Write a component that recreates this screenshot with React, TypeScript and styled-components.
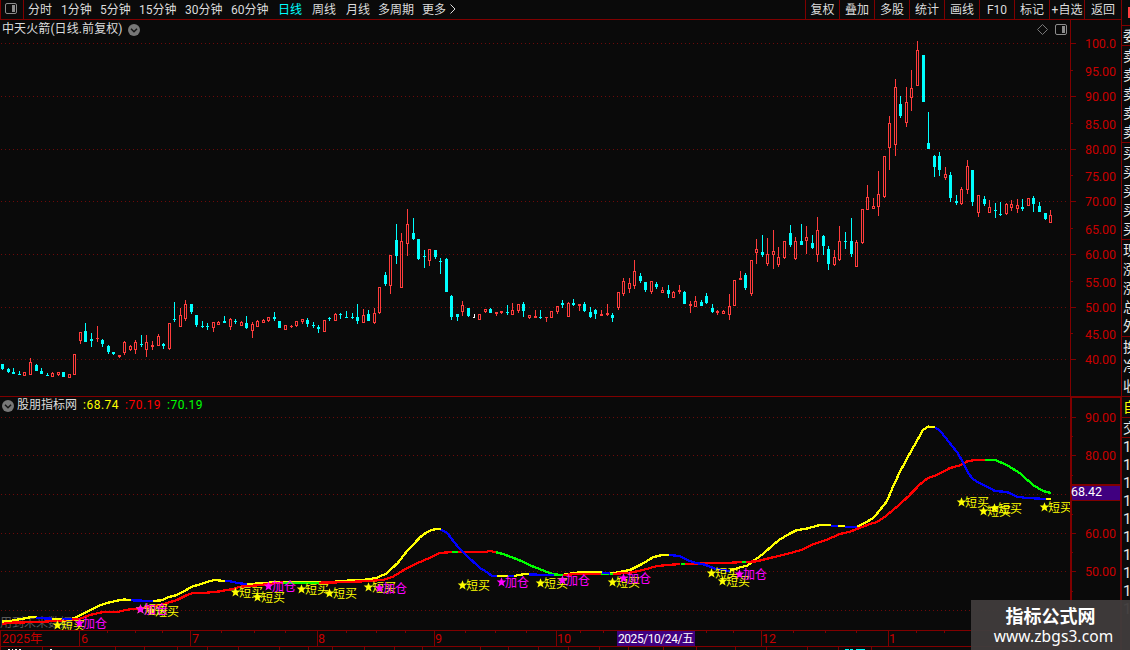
import React from 'react';
import styled, { createGlobalStyle } from 'styled-components';

const CJK = `Roboto, "Noto Sans CJK SC", sans-serif`;
const LINE = '#800000';
const GRID = '#6e0a0a';

const GlobalStyle = createGlobalStyle`
  * { box-sizing: border-box; }
  body { margin: 0; background: #0a0a0a; overflow: hidden; }
`;

const Screen = styled.div`
  position: relative;
  width: 1130px;
  height: 650px;
  display: flex;
  overflow: hidden;
  background: #0a0a0a;
  color: #dcdcdc;
  font-family: ${CJK};
  font-size: 12px;
  svg { display: block; flex: none; }
  svg text { font-family: ${CJK}; }
`;

const Main = styled.div`
  width: 1122px;
  flex: none;
  display: flex;
  flex-direction: column;
`;

const Toolbar = styled.div`
  height: 20px;
  flex: none;
  display: flex;
  border-bottom: 1px solid ${LINE};
  line-height: 21px;
  white-space: nowrap;
`;

const LayoutToggle = styled.div`
  width: 24px;
  border-left: 1px solid ${LINE};
  border-right: 1px solid ${LINE};
  padding: 3px 0 0 4px;
  margin-right: 4px;
`;

const Period = styled.div<{ $w: number; $active?: boolean }>`
  width: ${(p) => p.$w}px;
  flex: none;
  color: ${(p) => (p.$active ? '#00ffff' : '#dcdcdc')};
  svg { margin-top: 4px; }
`;

const Actions = styled.div`
  margin-left: auto;
  display: flex;
  border-right: 1px solid ${LINE};
`;

const Action = styled.div<{ $w: number }>`
  width: ${(p) => p.$w}px;
  height: 19px;
  border-left: 1px solid ${LINE};
  text-align: center;
`;

const Body = styled.div`
  display: flex;
  height: 630px;
`;

const Charts = styled.div`
  width: 1070px;
  flex: none;
  display: flex;
  flex-direction: column;
`;

const PanelHeader = styled.div<{ $h: number }>`
  height: ${(p) => p.$h}px;
  flex: none;
  display: flex;
  align-items: center;
  padding: 0 3px 0 2px;
  white-space: nowrap;
`;

const Title = styled.span`
  height: 16px;
  line-height: 14px;
  width: 120px;
  margin-right: 6px;
  letter-spacing: 0.1px;
`;

const HeaderIcons = styled.div`
  margin-left: auto;
  display: flex;
  gap: 7px;
`;

const IndicatorPanel = styled.div`
  border-top: 1px solid ${LINE};
  height: 234px;
`;

const Name = styled.span`
  margin: 0 6px 0 3px;
  height: 16px;
  line-height: 14px;
`;

const Reading = styled.span<{ $c: string }>`
  width: 42px;
  height: 16px;
  line-height: 14px;
  color: ${(p) => p.$c};
  letter-spacing: 0.5px;
`;

const Side = styled.div`
  width: 8px;
  flex: none;
  overflow: hidden;
  display: flex;
  flex-direction: column;
`;

const SideGroup = styled.div<{ $h: number }>`
  height: ${(p) => p.$h}px;
  flex: none;
  border-bottom: 1px solid ${LINE};
  display: flex;
  flex-direction: column;
  justify-content: space-around;
  overflow: hidden;
`;

const SideText = styled.div<{ $c?: string; $size?: number }>`
  height: 18px;
  padding-left: 1px;
  line-height: 18px;
  white-space: nowrap;
  font-size: ${(p) => p.$size ?? 14}px;
  color: ${(p) => p.$c ?? '#e6e6e6'};
`;

const Alert = styled.div`
  width: 2px;
  height: 11px;
  margin: 0 0 0 6px;
  background: #ff4040;
`;

const Brand = styled.div`
  position: absolute;
  right: 0;
  bottom: 0;
  width: 159px;
  height: 50px;
  background: rgba(64, 59, 59, 0.96);
  color: #fff;
  text-align: center;
`;

const BrandName = styled.div`
  margin-top: 3px;
  font: bold 18px/24px "Noto Sans CJK SC", sans-serif;
`;

const BrandUrl = styled.div`
  margin-left: 6px;
  font: 15.5px/18px "Noto Sans", sans-serif;
  letter-spacing: 0.1px;
`;

type Kind = 'u' | 'd' | 'w';
type Candle = [number, number, number, number, number, Kind];

// x, high, body top, body bottom, low, direction
const candles: Candle[] = [
  [2,364,364,369,370,'d'],[8,368,369,372,373,'d'],[13,368,372,374,374,'d'],[19,371,374,375,375,'d'],[24,372,372,376,376,'u'],
  [30,358,362,375,375,'u'],[36,364,365,371,371,'d'],[41,368,371,374,374,'d'],[47,373,375,376,376,'d'],[52,372,373,377,377,'u'],
  [58,372,372,375,376,'u'],[63,372,372,377,377,'d'],[69,374,374,378,378,'u'],[74,354,354,375,375,'u'],[80,332,332,341,344,'u'],
  [85,323,331,342,342,'d'],[91,333,339,341,347,'d'],[97,326,338,339,342,'u'],[102,339,340,344,347,'d'],[108,345,346,352,354,'d'],
  [113,352,352,354,355,'d'],[119,355,355,357,358,'u'],[124,341,342,353,355,'u'],[130,345,346,350,351,'u'],[135,340,342,350,354,'u'],
  [141,335,344,345,347,'d'],[146,335,342,350,357,'u'],[152,341,345,347,350,'u'],[158,334,336,346,346,'u'],[163,343,344,346,349,'d'],
  [169,323,323,349,350,'u'],[174,302,319,320,322,'d'],[180,308,315,327,327,'u'],[185,300,304,319,321,'u'],[191,304,304,312,314,'d'],
  [196,315,315,325,327,'d'],[202,321,326,327,328,'d'],[207,323,326,327,330,'d'],[213,322,322,328,332,'u'],[218,321,322,325,325,'u'],
  [224,316,321,323,323,'d'],[230,318,319,327,330,'u'],[235,319,321,322,324,'d'],[241,321,322,326,326,'u'],[246,316,323,328,329,'d'],
  [252,322,324,331,338,'u'],[257,320,321,327,327,'u'],[263,319,320,323,323,'u'],[268,317,317,321,322,'u'],[274,312,317,319,321,'d'],
  [279,321,321,328,328,'d'],[285,325,325,330,330,'u'],[291,325,326,327,328,'u'],[296,321,321,326,327,'u'],[302,319,319,322,324,'u'],
  [307,318,320,324,327,'d'],[313,322,325,326,328,'d'],[318,325,327,329,333,'d'],[324,320,320,332,332,'u'],[329,317,318,319,321,'d'],
  [335,313,314,321,321,'u'],[340,313,314,315,319,'d'],[346,311,317,318,318,'d'],[352,313,317,318,319,'d'],[357,304,317,321,324,'d'],
  [363,309,315,323,323,'u'],[368,310,314,321,321,'d'],[374,308,313,323,324,'u'],[379,287,287,313,314,'u'],[385,272,275,284,286,'d'],
  [390,255,255,286,294,'u'],[396,224,240,256,264,'d'],[401,233,241,288,288,'u'],[407,209,224,244,256,'u'],[413,218,233,239,240,'d'],
  [418,239,239,259,260,'d'],[424,250,256,257,268,'d'],[429,249,249,261,266,'u'],[435,250,250,257,259,'d'],[440,258,261,262,274,'d'],
  [446,258,259,292,292,'d'],[451,295,296,317,320,'d'],[457,314,314,317,321,'d'],[462,301,305,312,316,'u'],[468,308,308,316,317,'d'],
  [474,314,317,318,318,'w'],[479,314,314,320,320,'u'],[485,309,309,312,313,'u'],[490,308,309,313,313,'d'],[496,312,312,314,316,'u'],
  [501,311,311,313,314,'u'],[507,305,312,313,315,'d'],[512,303,310,315,315,'u'],[518,304,304,311,313,'u'],[523,302,304,311,317,'d'],
  [529,315,315,318,319,'u'],[535,310,316,318,318,'u'],[540,310,317,318,319,'d'],[546,317,317,318,322,'u'],[551,311,311,318,318,'u'],
  [557,306,306,312,314,'u'],[562,300,303,305,308,'d'],[568,302,303,317,317,'u'],[573,299,303,305,306,'d'],[579,304,304,306,311,'u'],
  [584,302,304,311,312,'d'],[590,307,312,317,318,'d'],[595,309,310,314,319,'d'],[601,310,314,316,316,'u'],[607,304,313,315,316,'u'],
  [612,313,315,318,322,'d'],[618,292,292,308,310,'u'],[623,278,281,294,296,'u'],[629,278,283,289,293,'u'],[634,260,271,286,289,'u'],
  [640,273,276,281,283,'d'],[645,282,282,290,292,'d'],[651,281,281,292,294,'u'],[656,282,284,287,289,'d'],[662,287,290,293,293,'u'],
  [668,285,290,294,298,'d'],[673,291,292,298,298,'u'],[679,285,290,292,294,'u'],[684,291,292,304,304,'d'],[690,301,304,306,313,'u'],
  [695,296,301,307,307,'u'],[701,300,302,306,306,'d'],[706,293,296,303,304,'d'],[712,304,308,312,313,'d'],[717,310,311,313,315,'u'],
  [723,310,311,314,314,'u'],[729,294,306,315,320,'u'],[734,280,280,306,306,'u'],[740,271,278,280,280,'u'],[745,273,275,288,290,'d'],
  [751,260,260,294,296,'u'],[756,239,249,253,264,'u'],[762,235,252,255,257,'d'],[767,238,254,264,266,'u'],[773,230,251,255,269,'u'],
  [778,247,257,265,267,'u'],[784,241,241,258,259,'u'],[790,225,233,245,247,'d'],[795,237,241,259,260,'u'],[801,224,241,245,245,'d'],
  [806,226,237,241,254,'u'],[812,235,243,248,249,'d'],[817,217,230,255,262,'u'],[823,235,236,246,255,'d'],[828,246,249,264,270,'d'],
  [834,250,257,265,266,'u'],[839,226,241,260,261,'u'],[845,232,241,242,249,'d'],[851,218,241,254,257,'d'],[856,240,242,267,267,'u'],
  [862,209,209,243,244,'u'],[867,185,197,210,210,'u'],[873,198,206,209,209,'u'],[878,171,194,207,216,'u'],[884,156,156,197,198,'u'],
  [889,116,123,148,170,'u'],[895,79,87,145,156,'u'],[900,96,104,116,118,'d'],[906,87,102,123,127,'u'],[911,70,88,98,111,'u'],
  [917,41,50,86,86,'u'],[923,55,55,102,102,'d'],[928,112,143,149,149,'d'],[934,155,156,167,177,'d'],[939,152,156,170,176,'d'],
  [945,167,174,178,180,'u'],[950,172,175,198,202,'d'],[956,195,201,203,205,'d'],[961,187,189,204,205,'u'],[967,160,166,190,194,'u'],
  [972,170,170,202,206,'d'],[978,195,195,213,217,'u'],[984,196,199,204,206,'d'],[989,200,207,213,213,'u'],[995,203,210,211,218,'d'],
  [1000,202,214,215,216,'d'],[1006,203,204,214,215,'u'],[1011,200,204,208,211,'u'],[1017,199,205,209,213,'u'],[1022,199,207,209,211,'d'],
  [1028,198,198,206,206,'u'],[1033,196,198,204,212,'d'],[1039,202,206,212,212,'d'],[1045,213,213,219,220,'d'],[1050,210,215,223,223,'u'],
];

const Y = '#ffff00';
const B = '#0000ff';
const R = '#ff0000';
const G = '#00ff00';
const M = '#ff00ff';

type Segment = [string, string];

const fastLine: Segment[] = [
  [Y, '2,621.7 10,621 17,619.7 25,618.3 32,617 37,617'],
  [B, '36,618 52,618.7'],
  [Y, '52,618.7 62,619'],
  [B, '62,619 72,619'],
  [Y, '72,619 80,615.3 87,612 95,607.7 100,605.3 108,602.7 117,600.7 124,599.5 131,600'],
  [B, '131,600.3 153,601'],
  [Y, '153,601 162,600.3 168,597.3 177,595 183,591.7 192,586.7 200,584.3 208,581.7 214,580 225,581'],
  [B, '225,581 230,581.3 238,583 247,584.3'],
  [Y, '247,584 263,583.3 273,582.3 293,582 307,582 335,581.7 340,581 362,580 370,579 377,578 382,575.3 386,574 392,568.3 398,562.7 406,552.3 412,546 420,537.3 427,532 433,529.7 438,528.7 441,529'],
  [B, '441,529.5 447,532.7 452,539.3 460,549.3 470,558.7 480,568 487,572.3 492,576 497,576'],
  [Y, '497,576 508,576'],
  [B, '508,576 514,576'],
  [Y, '514,576 523,574.3 529,574'],
  [B, '529,574.5 554,575'],
  [Y, '554,575 566,574.6 572,573.3 580,572.3 602,572.3'],
  [B, '602,572.5 610,573.5'],
  [Y, '610,573.5 618,572.3 630,570 642,564 653,557.3 662,555 669,554.7'],
  [B, '669,555 680,556 688,560.3 695,562.7 705,564.7 715,568.7 727,570.7 730,570.7'],
  [Y, '730,570.5 740,567.3 747,565.7 753,561.3 762,554.7 770,547.7 779,540 790,533.5 797,530 805,529 820,525 831,525'],
  [B, '831,525.7 838,525.7'],
  [Y, '838,525.7 845,526'],
  [B, '845,526.7 857,526.7'],
  [Y, '857,526.7 865,522.7 873,518.3 880,510 887,501 893,486.7 900,471.7 908,456.7 917,440.7 923,430 928,426.6 935,427.3'],
  [B, '935,427.3 940,430.7 950,443.3 958,453.3 963,462.7 968,472.7 973,479.3 980,483.3 995,491 1007,492 1017,496.7 1027,498 1046,499'],
  [Y, '1046,499 1051,499'],
];

const slowLine: Segment[] = [
  [R, '2,624 10,622.7 40,622 50,621.3 67,620.3 80,618.7 90,615 100,612.7 107,611.7 117,612.3 125,610 147,607.3 160,605 168,602.7 177,600 187,595 193,593 207,592.7 220,591.3 233,589 240,586.7 253,585.7 263,584.7 283,582.3'],
  [G, '283,582.7 319,582.7'],
  [R, '319,582.7 340,582.3 363,581.3 383,580 393,576.7 405,569.3 417,563.3 430,557.7 440,553 452,552'],
  [G, '452,552 458,552'],
  [R, '458,552 485,552 490,551 496,552.3'],
  [G, '496,552.3 503,554 513,557.7 523,561.7 530,565.3 542,570 553,574.3 563,575'],
  [R, '563,575 573,574.3 590,573.7 601,573.7'],
  [G, '601,573.7 613,574'],
  [R, '613,574 630,572.7 643,570 657,566 680,564'],
  [G, '681,564 685,564'],
  [R, '685,564 707,563 727,563 742,562'],
  [G, '742,562 746,562'],
  [R, '746,562 757,561.3 773,557.3 788,553.7 802,549.7 813,544.3 826,540 840,534 850,531.7 860,527.7 870,524 877,522 885,516.7 897,506.7 908,496.7 920,484.3 928,478 937,475 950,468 960,465.3 968,461 978,459.7 985,460'],
  [G, '985,460 995,460 1007,465 1020,473.3 1033,485 1043,491 1051,493'],
];

const buys = [[57,625],[140,609],[151,611],[235,592],[257,597],[301,589],[329,593],[368,587],[462,585],[540,583],[612,582],[711,573],[722,581],[961,502],[983,511],[994,508],[1044,507]];
const adds = [[79,623],[140,609],[268,586],[379,588],[501,582],[562,580],[623,578],[739,574]];

const monthTicks = [79,190,317,434,556,761,888];
const weekTicks = [107,135,162,221,254,285,346,376,405,465,495,526,580,603,706,733,793,825,856,916,944];
const footTicks = [42,115,144,177,207,238,279,308,332,364,394,422,480,508,538,568,599,628,663,696,735,766,807,838,871];
const months: [number, string][] = [[81,'6'],[192,'7'],[318,'8'],[435,'9'],[557,'10'],[762,'12'],[889,'1']];

const priceLabels: [number, string][] = [[43,'100.0'],[71,'95.00'],[96,'90.00'],[124,'85.00'],[149,'80.00'],[176,'75.00'],[201,'70.00'],[229,'65.00'],[254,'60.00'],[282,'55.00'],[307,'50.00'],[334,'45.00'],[359,'40.00'],[417,'90.00'],[455,'80.00'],[533,'60.00'],[571,'50.00']];

const Grid = ({ rows }: { rows: number[] }) => (
  <g stroke={GRID} strokeDasharray="1 3" shapeRendering="crispEdges">
    {rows.map((y) => <line key={y} x1={1} x2={1068} y1={y + 0.5} y2={y + 0.5} />)}
  </g>
);

const CandleShape = ({ c }: { c: Candle }) => {
  const [x, high, top, bottom, low, kind] = c;
  if (kind === 'w') {
    return <path fill="#fff" d={`M${x} ${high}h1v${low - high}h-2v-1h1z`} />;
  }
  if (kind === 'd') {
    return (
      <g fill="#00ffff">
        <rect x={x} y={high} width={1} height={low - high} />
        <rect x={x - 1} y={top} width={3} height={bottom - top} />
      </g>
    );
  }
  return (
    <g fill="#ff3c3c">
      <rect x={x} y={high} width={1} height={top - high} />
      <rect x={x} y={bottom} width={1} height={low - bottom} />
      {bottom - top > 2
        ? <rect x={x - 0.5} y={top + 0.5} width={2} height={bottom - top - 1} fill="none" stroke="#ff3c3c" />
        : <rect x={x - 1} y={top} width={3} height={bottom - top} />}
    </g>
  );
};

const Curve = ({ parts }: { parts: Segment[] }) => (
  <g fill="none" strokeWidth={2.3} shapeRendering="crispEdges">
    {parts.map(([color, points]) => <polyline key={points} stroke={color} points={points} />)}
  </g>
);

const Marker = ({ x, y, color, label }: { x: number; y: number; color: string; label: string }) => (
  <g fill={color} transform={`translate(${x + 0.5} ${y})`}>
    <path d="M0-4.8L1.3-1.5H4.8L2 1 3.1 4.6 0 2.5-3.1 4.6-2 1-4.8-1.5H-1.3z" />
    <text x={3.5} y={5} fontSize={12}>{label}</text>
  </g>
);

const ChevronBadge = () => (
  <svg width="12" height="12" viewBox="0 0 12 12">
    <circle cx="6" cy="6" r="6" fill="#777" />
    <path d="M3 4.7l3 3 3-3" fill="none" stroke="#151515" strokeWidth="1.5" />
  </svg>
);

const SplitIcon = ({ color }: { color: string }) => (
  <svg width="12" height="11" viewBox="0 0 12 11">
    <rect x=".5" y=".5" width="11" height="10" rx="1.5" fill="none" stroke={color} />
    <rect x="7" y="2" width="3" height="7" fill={color} />
  </svg>
);

const periods: [string, number][] = [['分时',33],['1分钟',39],['5分钟',39],['15分钟',46],['30分钟',46],['60分钟',47],['日线',34],['周线',34],['月线',32],['多周期',44],['更多',28]];
const actions: [string, number][] = [['复权',34],['叠加',35],['多股',35],['统计',35],['画线',35],['F10',35],['标记',35],['+自选',35],['返回',37]];

export default function App() {
  return (
    <>
      <GlobalStyle />
      <Screen>
        <Main>
          <Toolbar>
            <LayoutToggle><SplitIcon color="#8c8c8c" /></LayoutToggle>
            {periods.map(([label, w]) => <Period key={label} $w={w} $active={label === '日线'}>{label}</Period>)}
            <Period $w={8}>
              <svg width="6" height="10" viewBox="0 0 6 10"><path d="M.5.5L5 5 .5 9.5" fill="none" stroke="#dcdcdc" /></svg>
            </Period>
            <Actions>
              {actions.map(([label, w]) => <Action key={label} $w={w}>{label}</Action>)}
            </Actions>
          </Toolbar>
          <Body>
            <Charts>
              <PanelHeader $h={19}>
                <Title>中天火箭(日线.前复权)</Title>
                <ChevronBadge />
                <HeaderIcons>
                  <svg width="11" height="11" viewBox="0 0 11 11"><path d="M5.5.5l5 5-5 5-5-5z" fill="none" stroke="#777" /></svg>
                  <SplitIcon color="#8c8c8c" />
                </HeaderIcons>
              </PanelHeader>
              <svg width="1070" height="357" viewBox="0 39 1070 357">
                <Grid rows={[43, 96, 149, 201, 254, 307, 359]} />
                <g shapeRendering="crispEdges">
                  {candles.map((c) => <CandleShape key={c[0]} c={c} />)}
                </g>
              </svg>
              <IndicatorPanel>
                <PanelHeader $h={17}>
                  <ChevronBadge />
                  <Name>股朋指标网</Name>
                  <Reading $c="#ffff00">:68.74</Reading>
                  <Reading $c="#ff0000">:70.19</Reading>
                  <Reading $c="#00ff00">:70.19</Reading>
                </PanelHeader>
                <svg width="1070" height="216" viewBox="0 414 1070 216">
                  <Grid rows={[417, 455, 494, 533, 571, 610]} />
                  <text x="0" y="627" fontSize="12" fill="#5a5a5a">用到未来数据</text>
                  <Curve parts={fastLine.filter(([c]) => c === Y)} />
                  <Curve parts={slowLine} />
                  <Curve parts={fastLine.filter(([c]) => c === B)} />
                  {buys.map(([x, y]) => <Marker key={x} x={x} y={y} color={Y} label="短买" />)}
                  {adds.map(([x, y]) => <Marker key={x} x={x} y={y} color={M} label="加仓" />)}
                </svg>
              </IndicatorPanel>
              <svg width="1070" height="20" viewBox="0 630 1070 20">
                <g fill={LINE} shapeRendering="crispEdges">
                  <rect x="0" y="630" width="1070" height="1" />
                  <rect x="0" y="646" width="1070" height="1" />
                  <rect x="0" y="630" width="1" height="20" />
                  {monthTicks.map((x) => <rect key={x} x={x} y={630} width={1} height={16} />)}
                  {weekTicks.map((x) => <rect key={x} x={x} y={630} width={1} height={3} />)}
                  {footTicks.map((x) => <rect key={x} x={x} y={647} width={1} height={3} />)}
                </g>
                <g fill="#c80000" fontSize="12.5">
                  <text x="2" y="643">2025年</text>
                  {months.map(([x, label]) => <text key={x} x={x} y={643}>{label}</text>)}
                </g>
                <rect x="617" y="631" width="78" height="15" fill="#400080" />
                <text x="618" y="642.5" fontSize="12" fill="#fff" textLength="76">2025/10/24/五</text>
                <path d="M8 649.5h2m2 0h1m2 0h2m2 0h2M50 649.5h2" stroke="#fff" />
                <path d="M845 649.5h4m1 0h3m3 0h9" stroke="#00ffff" />
              </svg>
            </Charts>
            <svg width="52" height="630" viewBox="1070 20 52 630">
              <g fill={LINE} shapeRendering="crispEdges">
                <rect x="1070" y="20" width="1" height="630" />
                <rect x="1071" y="397" width="1" height="253" />
                <rect x="1121" y="20" width="1" height="630" />
                <rect x="1120" y="397" width="1" height="253" />
                <rect x="1070" y="396" width="52" height="2" />
                {[43, 96, 149, 201, 254, 307, 359, 417, 455, 533, 571].map((y) => <rect key={y} x={1071} y={y} width={5} height={1} />)}
                {[70, 123, 175, 228, 281, 333, 436, 475, 514, 552, 591].map((y) => <rect key={y} x={1071} y={y} width={2} height={1} />)}
                <rect x="1072" y="484" width="48" height="17" />
              </g>
              <g fill="#c80000" fontSize="12.5">
                {priceLabels.map(([y, label]) => <text key={y} x={1085} y={y + 5} textLength={31}>{label}</text>)}
              </g>
              <rect x="1072" y="486" width="48" height="14" fill="#400080" />
              <text x="1071" y="496" fontSize="12.5" fill="#fff" textLength="31">68.42</text>
            </svg>
          </Body>
        </Main>
        <Side>
          <SideGroup $h={26}><Alert /></SideGroup>
          <SideGroup $h={20}><SideText>委</SideText></SideGroup>
          <SideGroup $h={97}>{[1, 2, 3, 4, 5].map((n) => <SideText key={n}>卖</SideText>)}</SideGroup>
          <SideGroup $h={97}>{[1, 2, 3, 4, 5].map((n) => <SideText key={n}>买</SideText>)}</SideGroup>
          <SideGroup $h={97}>{['现', '涨', '涨', '总', '外'].map((t, i) => <SideText key={i}>{t}</SideText>)}</SideGroup>
          <SideGroup $h={60}>{['换', '净', '收'].map((t) => <SideText key={t}>{t}</SideText>)}</SideGroup>
          <SideGroup $h={21}><SideText $c="#ffff00">自</SideText></SideGroup>
          <SideGroup $h={20}><SideText>交</SideText></SideGroup>
          {Array.from({ length: 10 }, (_, i) => <SideText key={i} $size={15}>1</SideText>)}
        </Side>
        <Brand>
          <BrandName>指标公式网</BrandName>
          <BrandUrl>www.zbgs3.com</BrandUrl>
        </Brand>
      </Screen>
    </>
  );
}
